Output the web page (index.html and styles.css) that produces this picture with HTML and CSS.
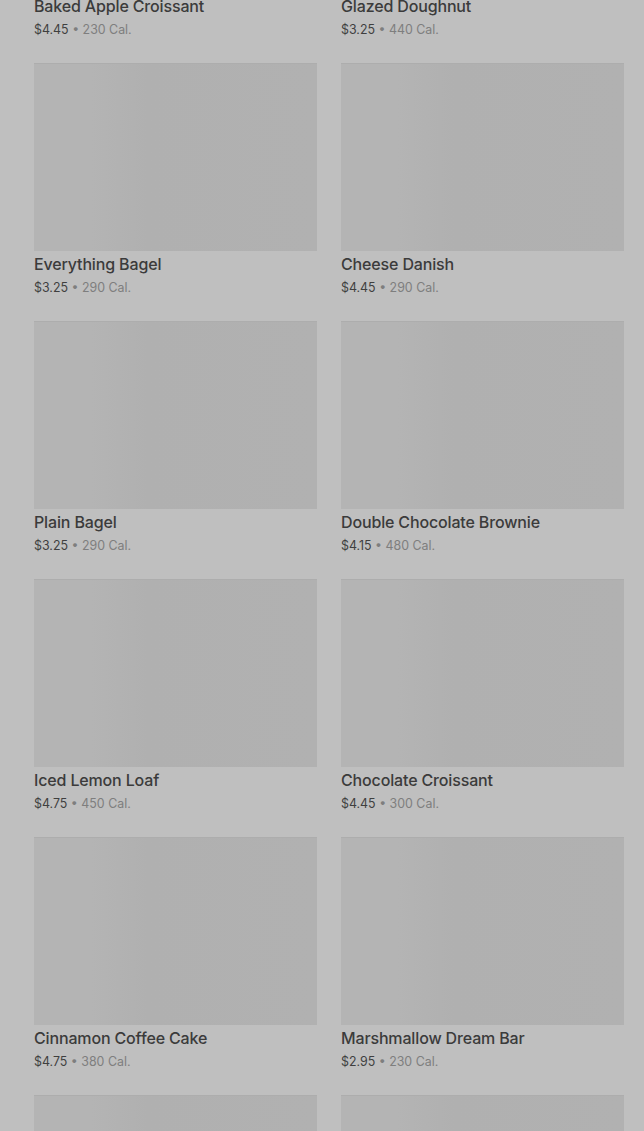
FILE: index.html
```html
<!DOCTYPE html>
<html>
<head>
  <title>Bakery</title>
  <link rel="stylesheet" href="styles.css">
</head>
<body>
  <div class="menu-grid">
    <div class="item">
      <div class="item-img"></div>
      <div class="item-name">Baked Apple Croissant</div>
      <div class="item-meta"><span class="price">$4.45</span> • 230 Cal.</div>
    </div>
    <div class="item">
      <div class="item-img"></div>
      <div class="item-name">Glazed Doughnut</div>
      <div class="item-meta"><span class="price">$3.25</span> • 440 Cal.</div>
    </div>
    <div class="item">
      <div class="item-img"></div>
      <div class="item-name">Everything Bagel</div>
      <div class="item-meta"><span class="price">$3.25</span> • 290 Cal.</div>
    </div>
    <div class="item">
      <div class="item-img"></div>
      <div class="item-name">Cheese Danish</div>
      <div class="item-meta"><span class="price">$4.45</span> • 290 Cal.</div>
    </div>
    <div class="item">
      <div class="item-img"></div>
      <div class="item-name">Plain Bagel</div>
      <div class="item-meta"><span class="price">$3.25</span> • 290 Cal.</div>
    </div>
    <div class="item">
      <div class="item-img"></div>
      <div class="item-name">Double Chocolate Brownie</div>
      <div class="item-meta"><span class="price">$4.15</span> • 480 Cal.</div>
    </div>
    <div class="item">
      <div class="item-img"></div>
      <div class="item-name">Iced Lemon Loaf</div>
      <div class="item-meta"><span class="price">$4.75</span> • 450 Cal.</div>
    </div>
    <div class="item">
      <div class="item-img"></div>
      <div class="item-name">Chocolate Croissant</div>
      <div class="item-meta"><span class="price">$4.45</span> • 300 Cal.</div>
    </div>
    <div class="item">
      <div class="item-img"></div>
      <div class="item-name">Cinnamon Coffee Cake</div>
      <div class="item-meta"><span class="price">$4.75</span> • 380 Cal.</div>
    </div>
    <div class="item">
      <div class="item-img"></div>
      <div class="item-name">Marshmallow Dream Bar</div>
      <div class="item-meta"><span class="price">$2.95</span> • 230 Cal.</div>
    </div>
    <div class="item">
      <div class="item-img"></div>
      <div class="item-name">&nbsp;</div>
      <div class="item-meta">&nbsp;</div>
    </div>
    <div class="item">
      <div class="item-img"></div>
      <div class="item-name">&nbsp;</div>
      <div class="item-meta">&nbsp;</div>
    </div>
  </div>
</body>
</html>
```

FILE: styles.css
```css
html, body {
  margin: 0;
  background-color: #bfbfbf;
  overflow: hidden;
}

body {
  font-family: Inter, Roboto, "Noto Sans", Arial, sans-serif;
}

.menu-grid {
  display: grid;
  grid-template-columns: repeat(2, 283px);
  column-gap: 24px;
  row-gap: 23px;
  padding: 0 20px 0 34px;
  margin-top: -195px;
}

.item-img {
  height: 188px;
  background-color: #b1b1b1;
  background-image: linear-gradient(90deg, #b4b4b4 0%, #b4b4b4 20%, #b0b0b0 40%, #b1b1b1 100%);
  border-top: 1px solid #adadad;
  box-sizing: border-box;
}

.item-name {
  margin-top: 2px;
  font-size: 16px;
  font-weight: 500;
  letter-spacing: -0.15px;
  line-height: 22px;
  color: #3b3b3b;
}

.item-meta {
  margin-top: 3px;
  font-size: 12.4px;
  line-height: 20px;
  color: #7e7e7e;
}

.price {
  color: #3f3f3f;
}
```
